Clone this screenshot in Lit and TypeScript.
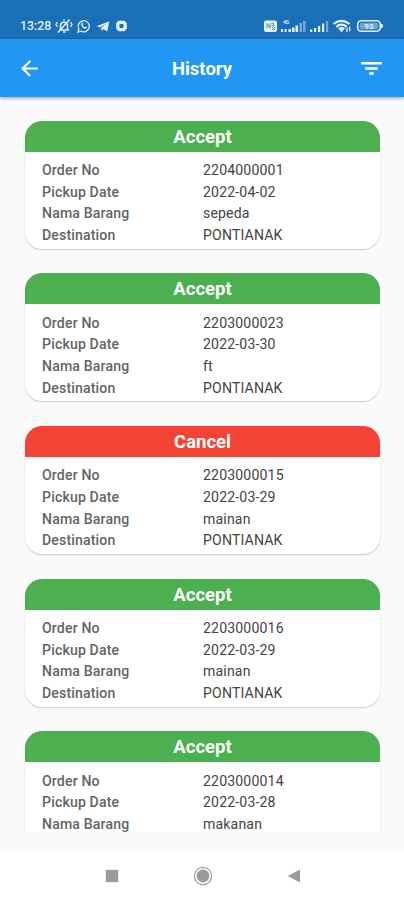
import { LitElement, html, css } from "lit";
import { customElement, property } from "lit/decorators.js";
import { classMap } from "lit/directives/class-map.js";

interface Order {
  status: "Accept" | "Cancel";
  no: string;
  date: string;
  item: string;
  destination: string;
}

const ORDERS: Order[] = [
  { status: "Accept", no: "2204000001", date: "2022-04-02", item: "sepeda", destination: "PONTIANAK" },
  { status: "Accept", no: "2203000023", date: "2022-03-30", item: "ft", destination: "PONTIANAK" },
  { status: "Cancel", no: "2203000015", date: "2022-03-29", item: "mainan", destination: "PONTIANAK" },
  { status: "Accept", no: "2203000016", date: "2022-03-29", item: "mainan", destination: "PONTIANAK" },
  { status: "Accept", no: "2203000014", date: "2022-03-28", item: "makanan", destination: "PONTIANAK" },
];

@customElement("status-bar")
class StatusBar extends LitElement {
  static styles = css`
    :host {
      display: flex;
      align-items: center;
      justify-content: space-between;
      height: 39px;
      box-sizing: border-box;
      padding: 12px 21px 0 20px;
      background: #1a70b8;
      color: #e3f0fb;
      font: 500 12.3px/16px Roboto, sans-serif;
    }
    .side { display: flex; align-items: center; }
    .time { width: 35px; white-space: nowrap; }
    svg { display: block; fill: currentColor; overflow: visible; }
    .line { fill: none; stroke: currentColor; }
    .dim { opacity: 0.45; }
    .tiny { font: 700 5px Roboto, sans-serif; }
    .pct { font: 700 8px Roboto, sans-serif; }
    .dark { stroke: #1a70b8; fill: none; }
  `;
  render() {
    return html`
      <div class="side">
        <span class="time">13:28</span>
        <svg width="22" height="16" viewBox="0 0 22 16">
          <path class="line" stroke-width="1.500" d="M4 12h10M5.500 11.500V7a3.600 3.600 0 0 1 7 0v4.500M9 3V1.500M8 14h2.500M3 14.500 14.500 1.500" />
          <path class="line" stroke-width="1.300" d="M2.500 4 1 6.500 2.500 9M15.500 4 17 6.500 15.500 9" />
        </svg>
        <svg width="25" height="16" viewBox="0 0 25 16">
          <path class="line" stroke-width="1.300" d="M1 14 1.800 11A5.600 5.600 0 1 1 4 13.200Z" />
          <path d="M4.500 5.200c.5-.6 1.200-.4 1.400.2l.4 1-.6.8c.5 1 1.100 1.500 2 1.900l.8-.7 1.300.7c.3.600-.4 1.700-1.400 1.700C6.300 10.800 3.500 8 4.500 5.200Z" />
        </svg>
        <svg width="13" height="16" viewBox="0 0 13 16">
          <path d="M-5.500 8.300 7.300 3.300 5.200 13.600 1.500 11.100-.4 13-.8 9.900 4.500 5.600-2 9.400Z" />
        </svg>
        <svg width="14" height="16" viewBox="0 0 14 16">
          <path fill-rule="evenodd" d="M3.500 2.800h6l2.300 2.500v5.400l-2.300 2.500h-6L1.200 10.700V5.300ZM6.500 5.700a2.300 2.300 0 1 0 0 4.600a2.300 2.300 0 1 0 0-4.600Z" />
        </svg>
      </div>
      <div class="side">
        <svg width="16" height="14" viewBox="0 0 16 14">
          <rect x="-1" y="1.500" width="13" height="11.500" rx="2" />
          <path class="dark" stroke-width="1" d="M2 9V4.500L5 9V4.500M6.500 4.500h2v2.200h-2M7 11l3-3M7 8l3 3" opacity=".75" />
        </svg>
        <svg width="29" height="14" viewBox="0 0 29 14">
          <text class="tiny" x="2" y="4.500">4G</text>
          <path d="M0 10h2v3H0zM3.500 10h2v3h-2zM7.500 10H10v3H7.500zM11 8.500h2.500V13H11zM14.500 6.500H17V13h-2.500z" />
          <path class="dim" d="M18.500 4H21v9h-2.500zM22 2h2.500v11H22z" />
        </svg>
        <svg width="23" height="14" viewBox="0 0 23 14">
          <path d="M0 10.500h2.200V13H0zM4 9h2.200v4H4zM8 7h2.200v6H8zM12 4.500h2.200V13H12z" />
          <path class="dim" d="M16 2h2.200v11H16z" />
        </svg>
        <svg width="24" height="14" viewBox="0 0 24 14">
          <path class="line" stroke-width="2.200" d="M.5 5Q8.500 -1.300 16.500 5M3.300 7.800Q8.500 3.600 13.700 7.800" />
          <path d="M5 9.300Q8.500 6.800 12 9.300L8.500 13.200ZM12.500 10.500 14.500 8v5h-1.200v-2.500ZM16 7.500h1.200v2.700H18L16 13Z" />
        </svg>
        <svg width="26" height="14" viewBox="0 0 26 14">
          <rect class="line" x=".7" y="1.700" width="22.600" height="10.600" rx="3.500" stroke-width="1.600" />
          <rect x="2.800" y="3.800" width="18.400" height="6.400" rx="1.500" opacity=".4" />
          <path d="M24 5h1q1 0 1 2t-1 2h-1z" />
          <text class="pct" x="7.300" y="9.900">93</text>
        </svg>
      </div>
    `;
  }
}

@customElement("order-card")
class OrderCard extends LitElement {
  @property({ attribute: false }) order!: Order;
  static styles = css`
    :host {
      display: block;
      flex: none;
      height: 128.200px;
      border-radius: 17px;
      overflow: hidden;
      background: #fff;
      box-shadow: 0 1px 1.500px rgba(0, 0, 0, 0.2);
      font-family: Roboto, sans-serif;
    }
    .head {
      height: 31px;
      background: #4caf50;
      color: #fff;
      font-size: 18.500px;
      font-weight: 700;
      line-height: 32px;
      text-align: center;
    }
    .head.cancel { background: #f44336; }
    .rows {
      display: grid;
      grid-template-columns: 161px 1fr;
      grid-auto-rows: 21.600px;
      padding: 8.600px 0 0 17px;
      font-size: 14.100px;
      line-height: 21.600px;
      letter-spacing: 0.150px;
      color: #444;
    }
    .label { font-weight: 500; color: #646464; }
  `;
  render() {
    const o = this.order;
    return html`
      <div class=${classMap({ head: true, cancel: o.status === "Cancel" })}>${o.status}</div>
      <div class="rows">
        <span class="label">Order No</span><span>${o.no}</span>
        <span class="label">Pickup Date</span><span>${o.date}</span>
        <span class="label">Nama Barang</span><span>${o.item}</span>
        <span class="label">Destination</span><span>${o.destination}</span>
      </div>
    `;
  }
}

@customElement("app-root")
class AppRoot extends LitElement {
  static styles = css`
    :host {
      display: flex;
      flex-direction: column;
      height: 900px;
      overflow: hidden;
      background: #fafafa;
      font-family: Roboto, sans-serif;
    }
    status-bar { flex: none; }
    .bar {
      flex: none;
      display: grid;
      grid-template-columns: 24px 1fr 24px;
      align-items: center;
      height: 58px;
      box-sizing: border-box;
      padding: 0 21px 0 17px;
      background: #2196f3;
      box-shadow: 0 1px 4px rgba(0, 0, 0, 0.4);
      z-index: 1;
    }
    .bar svg { display: block; fill: #fff; }
    h1 {
      margin: 0;
      padding: 1px 0 0 4px;
      color: #fff;
      font-size: 18.500px;
      font-weight: 700;
      text-align: center;
    }
    .list {
      display: flex;
      flex-direction: column;
      gap: 24.500px;
      height: 735px;
      box-sizing: border-box;
      padding: 23.500px 24px 0 25px;
      overflow: hidden;
    }
    .nav {
      display: flex;
      justify-content: center;
      align-items: center;
      gap: 74px;
      height: 48px;
      margin-top: auto;
      padding-left: 1px;
      background: #fff;
    }
    .nav svg { display: block; fill: #9b9b9b; }
    .ring { fill: none; stroke: #9b9b9b; }
  `;
  render() {
    return html`
      <status-bar></status-bar>
      <div class="bar">
        <svg width="25" height="25" viewBox="0 0 24 24"><path d="M20 11H7.830l5.590-5.590L12 4l-8 8 8 8 1.410-1.410L7.830 13H20v-2z" /></svg>
        <h1>History</h1>
        <svg width="25" height="25" viewBox="0 0 24 24"><path d="M10 18h4v-2.300h-4zM2 5.800v2.400h20V5.800zM6 13.200h12v-2.400H6z" /></svg>
      </div>
      <div class="list">${ORDERS.map((o) => html`<order-card .order=${o}></order-card>`)}</div>
      <div class="nav">
        <svg width="14" height="14" viewBox="0 0 14 14"><path d="M.8.8h12.400v12.400H.8z" /></svg>
        <svg width="20" height="20" viewBox="0 0 20 20"><circle class="ring" cx="10" cy="10" r="8.600" stroke-width="1.200" /><circle cx="10" cy="10" r="6.400" /></svg>
        <svg width="14" height="14" viewBox="0 0 14 14"><path d="M13 .5v13L.8 7z" /></svg>
      </div>
    `;
  }
}
